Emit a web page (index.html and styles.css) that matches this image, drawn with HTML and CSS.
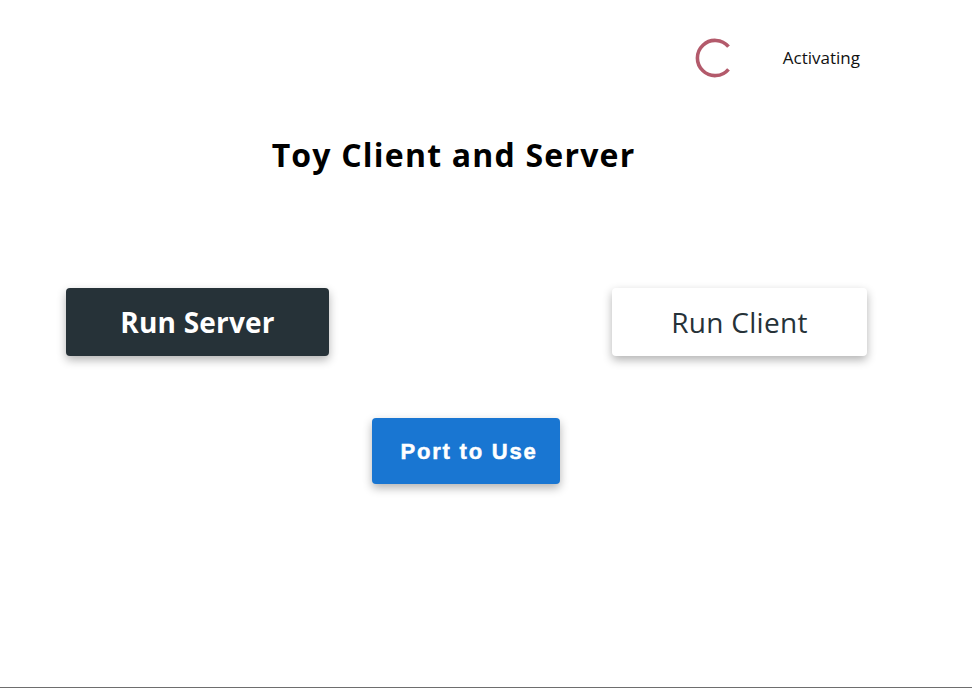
FILE: index.html
```html
<!DOCTYPE html>
<html lang="en">
<head>
<meta charset="utf-8">
<title>Toy Client and Server</title>
<link rel="stylesheet" href="styles.css">
</head>
<body>
<div class="page">
  <header class="status">
    <svg class="spinner" width="40" height="40" viewBox="0 0 40 40" aria-hidden="true">
      <path d="M33.5 8.7 A17.6 17.6 0 1 0 33.5 31.3" fill="none" stroke="#b35a6b" stroke-width="3.6"/>
    </svg>
    <span class="status-text">Activating</span>
  </header>
  <h1 class="title">Toy Client and Server</h1>
  <div class="actions">
    <button class="btn btn-dark">Run Server</button>
    <button class="btn btn-light">Run Client</button>
  </div>
  <div class="port-row">
    <button class="btn btn-blue">Port to Use</button>
  </div>
</div>
</body>
</html>
```
FILE: styles.css
```css
html, body {
  margin: 0;
  padding: 0;
  background: #ffffff;
}

.page {
  height: 687px;
  border-bottom: 1px solid #6e6e6e;
  overflow: hidden;
  font-family: "Open Sans", "Noto Sans", sans-serif;
  color: #000;
}

.status {
  display: flex;
  justify-content: flex-end;
  align-items: center;
  gap: 48px;
  padding: 37px 112px 0 0;
  height: 40px;
}

.spinner {
  display: block;
  margin-top: 2px;
}

.status-text {
  font-size: 17px;
  color: #111;
}

.title {
  margin: 57px 0 0 0;
  padding-right: 65px;
  text-align: center;
  font-size: 32px;
  font-weight: 700;
  letter-spacing: 1.2px;
  line-height: 42px;
}

.actions {
  display: flex;
  justify-content: space-between;
  padding: 0 105px 0 66px;
  margin-top: 112px;
}

.btn {
  border: none;
  border-radius: 4px;
  cursor: pointer;
  display: flex;
  align-items: center;
  justify-content: center;
  padding: 0;
}

.btn-dark {
  width: 263px;
  height: 68px;
  background: #263238;
  color: #ffffff;
  font-family: "Open Sans", "Noto Sans", sans-serif;
  font-weight: 700;
  font-size: 28px;
  letter-spacing: 0.2px;
  box-shadow: 0 4px 10px rgba(0, 0, 0, 0.3);
}

.btn-light {
  width: 255px;
  height: 68px;
  background: #ffffff;
  color: #263238;
  font-family: "Open Sans", "Noto Sans", sans-serif;
  font-weight: 400;
  font-size: 28px;
  letter-spacing: 0.3px;
  box-shadow: 0 4px 10px rgba(0, 0, 0, 0.3);
}

.port-row {
  display: flex;
  padding-left: 372px;
  margin-top: 62px;
}

.btn-blue {
  width: 188px;
  height: 66px;
  padding: 2px 0 0 6px;
  background: #1976d2;
  color: #ffffff;
  font-family: "Liberation Sans", Arial, sans-serif;
  font-weight: 700;
  font-size: 22px;
  letter-spacing: 1.8px;
  -webkit-text-stroke: 0.5px #ffffff;
  box-shadow: 0 4px 10px rgba(0, 0, 0, 0.3);
}
```
